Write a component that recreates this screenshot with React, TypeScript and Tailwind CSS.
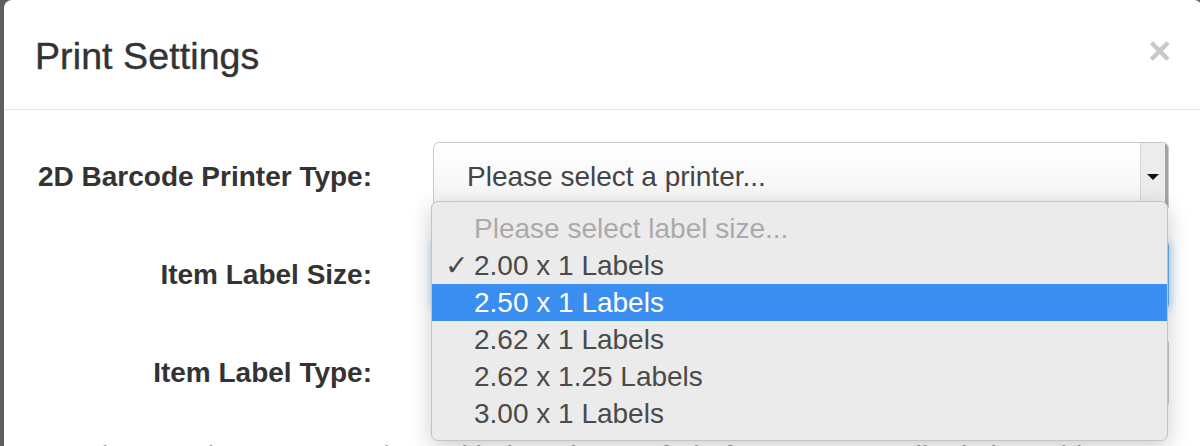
import { Fragment } from 'react';

const labelSizes = [
  { label: '2.00 x 1 Labels', checked: true },
  { label: '2.50 x 1 Labels', active: true },
  { label: '2.62 x 1 Labels' },
  { label: '2.62 x 1.25 Labels' },
  { label: '3.00 x 1 Labels' },
];

// Native-looking select box with the grey arrow column on the right
function SelectBox({ text, focused }: { text?: string; focused?: boolean }) {
  return (
    <div
      className={
        focused
          ? 'flex h-[70px] w-[736px] overflow-hidden rounded-[6px] border border-[#66afe9] bg-gradient-to-b from-white to-[#f3f3f3] shadow-[0_0_10px_rgba(102,175,233,0.7)]'
          : 'flex h-[70px] w-[736px] overflow-hidden rounded-[6px] border border-[#c8c8c8] bg-gradient-to-b from-white to-[#f3f3f3]'
      }
    >
      <div className="flex flex-1 items-center pl-[33px] text-[28px] text-[#444]">{text}</div>
      <div className="flex w-[25px] items-center justify-center border-l border-[#d6d6d6] bg-[#ececec]">
        <svg width="12" height="6" viewBox="0 0 12 6">
          <polygon points="0,0 12,0 6,6" fill="#111" />
        </svg>
      </div>
      <div className="w-[3px] bg-[#a3a3a3]" />
    </div>
  );
}

export default function App() {
  return (
    <div className="min-h-screen overflow-hidden bg-[#5e5e5e] pl-[4px] font-['Liberation_Sans',Arial,sans-serif]">
      <div className="relative w-[1198px] rounded-t-[8px] bg-white">
        {/* Header */}
        <header className="flex h-[110px] items-center justify-between border-b-[1.5px] border-[#e5e5e5] pl-[31px] pr-[31px]">
          <h4 className="pt-[4px] text-[37.5px] font-medium tracking-[0.1px] text-[#333] [-webkit-text-stroke:0.4px_#333]">
            Print Settings
          </h4>
          <button className="mb-[8px] text-[39px] font-bold leading-none text-[#c8c8c8]">×</button>
        </header>

        {/* Form rows */}
        <div className="pl-[31px] pt-[32px]">
          <div className="flex flex-col gap-[28px]">
            <div className="flex items-center gap-[61px]">
              <label className="w-[337px] text-right text-[28px] font-bold text-[#333]">2D Barcode Printer Type:</label>
              <SelectBox text="Please select a printer..." />
            </div>
            <div className="flex items-center gap-[61px]">
              <label className="w-[337px] text-right text-[28px] font-bold text-[#333]">Item Label Size:</label>
              <SelectBox focused />
            </div>
            <div className="flex items-center gap-[61px]">
              <label className="w-[337px] text-right text-[28px] font-bold text-[#333]">Item Label Type:</label>
              <SelectBox />
            </div>
          </div>
          <p className="mt-[29px] whitespace-nowrap text-[28px] leading-[38px] text-[#999]">
            Requires version 3.0.0 - Notice: With the release of Firefox Quantum, all printing add-ons are disabled
          </p>
        </div>

        {/* Open dropdown list for label size */}
        <div className="absolute left-[427px] top-[201px] w-[737px] rounded-[7px] border border-[#c4c4c4] bg-[#ebebeb] py-[8px] shadow-[0_6px_22px_rgba(0,0,0,0.2)]">
          <div className="flex h-[37px] items-center pl-[42px] text-[28px] text-[#aaa]">Please select label size...</div>
          {labelSizes.map((s) => (
            <Fragment key={s.label}>
              <div
                className={
                  s.active
                    ? 'flex h-[37px] items-center bg-[#3a8ef0] text-[28px] text-white'
                    : 'flex h-[37px] items-center text-[28px] text-[#4a4a4a]'
                }
              >
                <span className="w-[42px] pl-[13px] font-['DejaVu_Sans',sans-serif] text-[28px] font-bold leading-none">
                  {s.checked ? '✓' : ''}
                </span>
                {s.label}
              </div>
            </Fragment>
          ))}
        </div>
      </div>
    </div>
  );
}
